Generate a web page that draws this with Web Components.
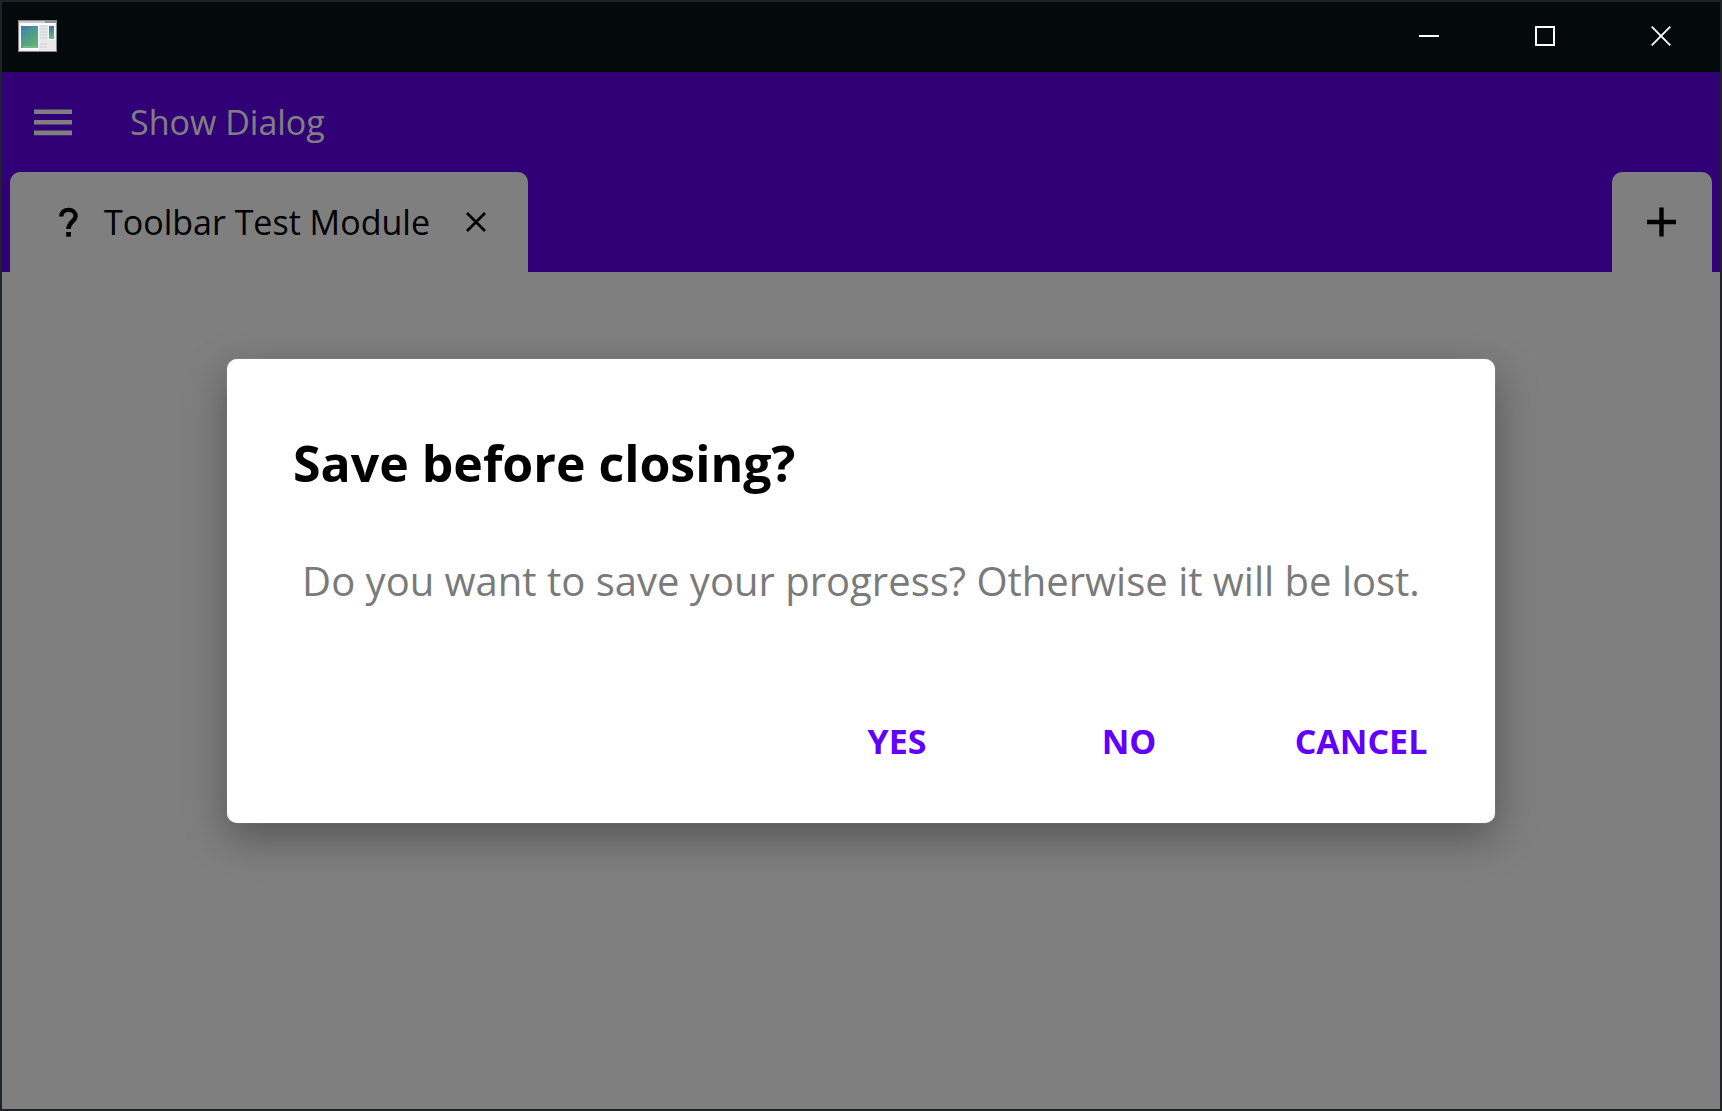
<!DOCTYPE html>
<html lang="en">
<head>
<meta charset="utf-8">
<title>Toolbar Test Module</title>
<style>
  html, body { margin: 0; height: 100%; }
  body { font-family: "Segoe UI", "Open Sans", "Noto Sans", sans-serif; --primary: #6200ee; --surface: #fff; }
</style>
</head>
<body>
<app-window>
  <title-bar slot="title"></title-bar>
  <tool-bar slot="toolbar">Show Dialog</tool-bar>
  <tab-strip slot="tabs">
    <module-tab>Toolbar Test Module</module-tab>
  </tab-strip>
  <modal-dialog slot="overlay">
    <span slot="heading">Save before closing?</span>
    <span>Do you want to save your progress? Otherwise it will be lost.</span>
    <dialog-action slot="actions">YES</dialog-action>
    <dialog-action slot="actions">NO</dialog-action>
    <dialog-action slot="actions">CANCEL</dialog-action>
  </modal-dialog>
</app-window>

<script>
const BASE = `
  *, *::before, *::after { box-sizing: border-box; }
  button { margin: 0; padding: 0; border: 0; background: none; font: inherit; color: inherit; cursor: pointer; }
  svg { display: block; }
`;
function define(name, markup) {
  customElements.define(name, class extends HTMLElement {
    constructor() {
      super();
      this.attachShadow({ mode: 'open' }).innerHTML = markup.replace('<style>', '<style>' + BASE);
    }
  });
}

define('app-window', `
  <style>
    :host { display: flex; flex-direction: column; box-sizing: border-box; min-height: 100%; border: 2px solid #1d2427; background: var(--surface); }
    .client { position: relative; flex: 1; display: flex; flex-direction: column; }
    header { background: var(--primary); }
    main { flex: 1; background: var(--surface); }
  </style>
  <slot name="title"></slot>
  <div class="client">
    <header><slot name="toolbar"></slot><slot name="tabs"></slot></header>
    <main></main>
    <slot name="overlay"></slot>
  </div>
`);

define('title-bar', `
  <style>
    :host { display: flex; justify-content: space-between; align-items: stretch; box-sizing: border-box; height: 70px; padding: 0 1px 2px 16px; background: #040a0c; color: #fff; }
    .logo { align-self: center; }
    .controls { display: flex; }
    button { width: 116px; display: grid; place-items: center; }
  </style>
  <svg class="logo" width="39" height="32" viewBox="0 0 39 32" aria-hidden="true">
    <defs>
      <linearGradient id="g" x1="0" y1="0" x2=".6" y2="1"><stop offset="0" stop-color="#3d78a8"/><stop offset=".5" stop-color="#4a9c8c"/><stop offset="1" stop-color="#62b070"/></linearGradient>
      <linearGradient id="h" x1="0" y1="0" x2="0" y2="1"><stop offset="0" stop-color="#3a6ea8"/><stop offset="1" stop-color="#74b886"/></linearGradient>
    </defs>
    <rect x=".5" y=".5" width="38" height="31" fill="#e9e9ec" stroke="#8a8a8c"/>
    <rect x="1" y="1" width="26" height="2" fill="#c9c9d6"/>
    <rect x="27" y="1" width="11" height="2" fill="#93939a"/>
    <rect x="2" y="3" width="35" height="2" fill="#fff"/>
    <rect x="2" y="5" width="19" height="25" fill="#fafafa"/>
    <rect x="3" y="6" width="17" height="22" fill="url(#g)"/>
    <path d="M3 11 Q10 13 20 10" stroke="#5b93b8" stroke-width="1" fill="none" opacity=".6"/>
    <path d="M5 27h14" stroke="#8cc79a" stroke-width="1"/>
    <path d="M22 6h7M22 9h7M22 12h7M22 15h7M22 18h7M22 24h7M22 27h7" stroke="#cfcfd0" stroke-width="1"/>
    <rect x="30" y="5" width="7" height="15" fill="#fafafa"/>
    <rect x="31" y="6" width="5" height="13" fill="url(#h)"/>
  </svg>
  <div class="controls">
    <button aria-label="Minimize"><svg width="20" height="20"><path d="M0 10h20" stroke="#fff" stroke-width="2"/></svg></button>
    <button aria-label="Maximize"><svg width="20" height="20"><rect x="1" y="1" width="18" height="18" fill="none" stroke="#fff" stroke-width="2"/></svg></button>
    <button aria-label="Close"><svg width="20" height="20"><path d="M.7 .7l18.6 18.6M19.3 .7L.7 19.3" stroke="#fff" stroke-width="1.8"/></svg></button>
  </div>
`);

define('tool-bar', `
  <style>
    :host { display: flex; align-items: center; height: 100px; padding-left: 26px; gap: 52px; color: #fff; }
    .menu { display: block; }
    .item { font-size: 34px; line-height: 48px; }
  </style>
  <button class="menu" aria-label="Menu">
    <svg width="50" height="50" viewBox="0 0 50 50" fill="currentColor"><path d="M6 12.400h38v4.600H6zM6 23h38v4.600H6zM6 33.600h38v4.600H6z"/></svg>
  </button>
  <button class="item"><slot></slot></button>
`);

define('tab-strip', `
  <style>
    :host { display: flex; justify-content: space-between; height: 100px; padding: 0 8px; }
    .add { width: 100px; display: grid; place-items: center; background: var(--surface); border-radius: 10px 10px 0 0; color: #000; }
  </style>
  <slot></slot>
  <button class="add" aria-label="New tab"><svg width="30" height="30"><path d="M14.500 .5v29M0 15h29" stroke="currentColor" stroke-width="4.400"/></svg></button>
`);

define('module-tab', `
  <style>
    :host { display: flex; align-items: center; gap: 20px; padding: 0 26px 0 40px; background: var(--surface); border-radius: 10px 10px 0 0; color: #000; }
    .label { display: flex; align-items: center; gap: 16px; font-size: 34px; line-height: 48px; }
    .close { width: 52px; height: 52px; display: grid; place-items: center; }
  </style>
  <button class="label">
    <svg width="38" height="38" viewBox="0 0 38 38" aria-hidden="true">
      <path d="M11.300 13.500C11.300 9.500 14.400 6.900 18.500 6.900C22.800 6.900 25.600 9.500 25.600 13C25.600 18.400 18.500 18.700 18.500 26" fill="none" stroke="currentColor" stroke-width="4.400"/>
      <rect x="16.200" y="29" width="4.700" height="4.700" fill="currentColor"/>
    </svg>
    <slot></slot>
  </button>
  <button class="close" aria-label="Close tab"><svg width="20" height="20"><path d="M1 1l18 18M19 1L1 19" stroke="currentColor" stroke-width="2.800"/></svg></button>
`);

define('modal-dialog', `
  <style>
    :host { position: absolute; inset: 0; display: flex; align-items: center; justify-content: center; background: rgba(0,0,0,.5); }
    section { width: 1268px; max-width: calc(100% - 64px); padding: 68px 34px 30px; border-radius: 10px; background: #fff;
      box-shadow: 0 0 1px rgba(255,255,255,.5), 0 14px 40px rgba(0,0,0,.34); }
    h2 { margin: 0 32px; font-size: 50px; line-height: 72px; font-weight: 700; color: #000; }
    p { margin: 52px 0 78px; font-size: 40px; line-height: 60px; text-align: center; color: #7a7a7a; }
    .actions { display: flex; justify-content: flex-end; gap: 32px; }
  </style>
  <section role="dialog" aria-modal="true" aria-labelledby="t">
    <h2 id="t"><slot name="heading"></slot></h2>
    <p><slot></slot></p>
    <div class="actions"><slot name="actions"></slot></div>
  </section>
`);

define('dialog-action', `
  <style>
    :host { display: block; width: 200px; }
    button { width: 100%; height: 104px; font-size: 34px; line-height: 48px; font-weight: 700; color: #6200ff; }
  </style>
  <button><slot></slot></button>
`);
</script>
</body>
</html>
